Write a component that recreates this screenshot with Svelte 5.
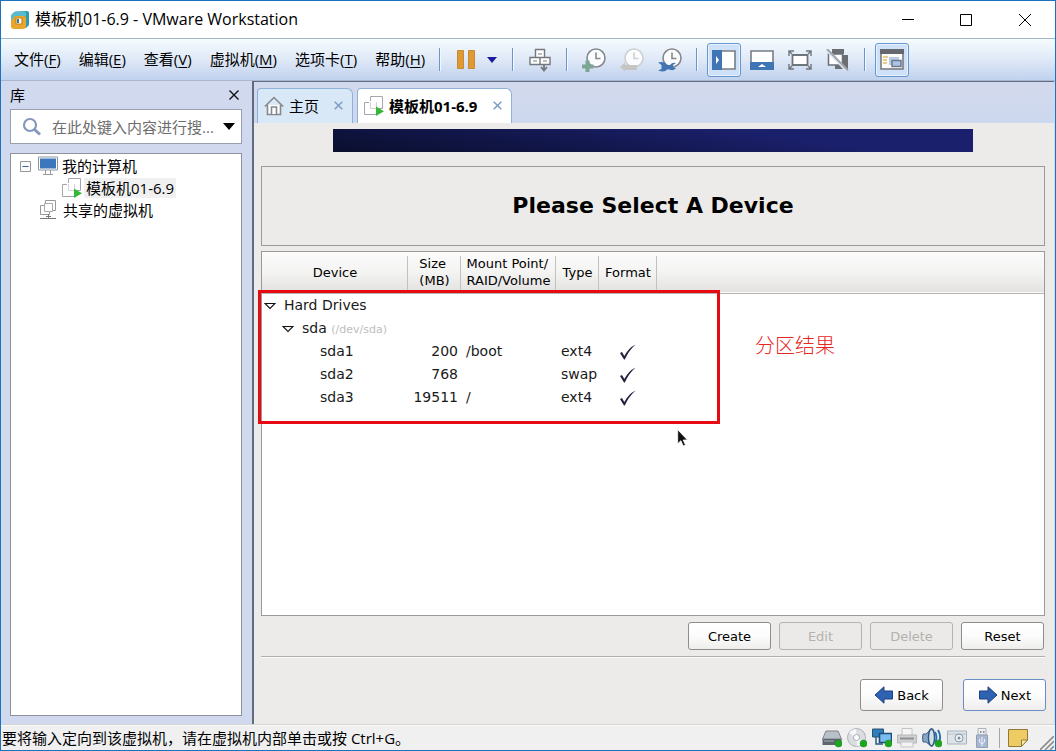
<script>
  const menus = [
    ['文件', 'F'],
    ['编辑', 'E'],
    ['查看', 'V'],
    ['虚拟机', 'M'],
    ['选项卡', 'T'],
    ['帮助', 'H']
  ];
  const partitions = [
    { name: 'sda1', size: 200, mount: '/boot', type: 'ext4' },
    { name: 'sda2', size: 768, mount: '', type: 'swap' },
    { name: 'sda3', size: 19511, mount: '/', type: 'ext4' }
  ];
  let query = $state('');
</script>

{#snippet clock(color)}
  <circle cx="14" cy="10" r="9" fill="#fbfcfe" stroke={color} stroke-width="1.6" />
  <path d="M14 4.500v6h4.500" fill="none" stroke={color} stroke-width="1.6" />
{/snippet}

{#snippet vmIcon()}
  <svg class="vm" width="20" height="20" viewBox="0 0 20 20" aria-hidden="true">
    <path d="M6.500.500h12v12h-12z" fill="#fff" stroke="#a9a3ae" />
    <path d="M.500 6.500h12v12H.500z" fill="#fff" stroke="#a9a3ae" />
    <path d="M5 5h9v9H5z" fill="#fff" />
    <path d="M6.500 6v6.500h6V6" fill="none" stroke="#d5d1d9" />
    <path d="M12 10.500v9.500l8-4.700z" fill="#35b835" />
  </svg>
{/snippet}

{#snippet expander()}
  <svg width="12" height="8" viewBox="0 0 12 8" aria-hidden="true">
    <path d="M1 1.500h10L6 6.500z" fill="#fff" stroke="#111" stroke-width="1.1" />
  </svg>
{/snippet}

{#snippet online()}
  <circle cx="16.500" cy="15.500" r="3.500" fill="#18a81c" stroke="#2c8c2c" stroke-width=".6" />
{/snippet}

<div class="window">
  <header class="titlebar">
    <svg width="20" height="20" viewBox="0 0 20 20" aria-hidden="true">
      <path d="M5 1.500 17 1q2 0 2 2v12l-3 3H5z" fill="#2f9bb3" />
      <path d="M1 5 4 2h12l-3 4v3H7v5l-3 3H2q-1 0-1-2z" fill="#5cbccb" />
      <path d="M1 14V7l4-1h9q2 0 2 2v9q-1 2-3 2H4q-3 0-3-3z" fill="#eaa62c" />
      <path d="M1 6 4 3h12v3H5L1 11z" fill="#5cbccb" />
      <path d="M6 8h6v6H6z" fill="#fff" stroke="#c9811b" stroke-width="1.200" />
      <path d="M7 9h2v4H7z" fill="#2c7da4" />
    </svg>
    <h1>模板机01-6.9 - VMware Workstation</h1>
    <div class="winctl">
      <button aria-label="最小化"><svg width="14" height="14" viewBox="0 0 14 14"><path d="M1 6.500h12" /></svg></button>
      <button aria-label="最大化"><svg width="14" height="14" viewBox="0 0 14 14"><path d="M1.500 1.500h11v11h-11z" /></svg></button>
      <button aria-label="关闭"><svg width="14" height="14" viewBox="0 0 14 14"><path d="m1 1 12 12M13 1 1 13" /></svg></button>
    </div>
  </header>

  <div class="toolbar">
    <nav>
      {#each menus as [label, key]}
        <button>{label}(<u>{key}</u>)</button>
      {/each}
    </nav>
    <div class="tools">
      <span class="sep"></span>
      <div class="power">
        <button aria-label="挂起"><svg width="18" height="20" viewBox="0 0 18 20"><path d="M.500.500h6v18h-6zM11.500.500h6v18h-6z" fill="#e09a34" stroke="#c98a35" /></svg></button>
        <button class="drop" aria-label="电源选项"><svg width="10" height="6" viewBox="0 0 10 6"><path d="M0 0h10L5 6z" fill="#1b1b9c" /></svg></button>
      </div>
      <span class="sep"></span>
      <button aria-label="发送 Ctrl+Alt+Del">
        <svg width="22" height="24" viewBox="0 0 22 24" fill="#fff" stroke="#74777c" stroke-width="1.400">
          <path d="M6.500 1.500h9v8h-9zM1 9.500h10v7H1zM11 9.500h10v7H11z" />
          <path d="M9 6h4M4 13h4M14 13h4" stroke="#a5a7ab" />
          <path d="M15 16v6m-3-3 3 3.500 3-3.500" fill="none" stroke-width="1.800" />
        </svg>
      </button>
      <span class="sep"></span>
      <button aria-label="拍摄快照"><svg width="24" height="24" viewBox="0 0 24 24">{@render clock('#85888c')}<path d="M3.500 12.500h4v4h4v4h-4v3.500h-4v-3.500H0v-4h3.500z" fill="#7da596" /></svg></button>
      <button aria-label="恢复快照" disabled><svg width="24" height="24" viewBox="0 0 24 24">{@render clock('#cdcfd2')}<path d="m0 19 5-4.500V17h12v5H5v1.500z" fill="#c6c5c4" /></svg></button>
      <button aria-label="管理快照"><svg width="24" height="24" viewBox="0 0 24 24">{@render clock('#85888c')}<path d="M0 14.500q7-1.500 9 2.500h3q2-3 6-2l-3 2v2l3 1q-3 3.500-6.500 1.500H9Q7 25 0 22.500l3.500-1.500v-4z" fill="#4476b4" /></svg></button>
      <span class="sep"></span>
      <button class="on" aria-label="显示库"><svg width="24" height="20" viewBox="0 0 24 20"><path d="M1 1h22v18H1z" fill="#fff" stroke="#777d87" stroke-width="1.600" /><path d="M0 0h10v20H0z" fill="#3f74b5" /><path d="m4 6 3 4-3 4z" fill="#fff" /></svg></button>
      <button aria-label="显示缩略图栏"><svg width="24" height="20" viewBox="0 0 24 20"><path d="M1 1h22v18H1z" fill="#fff" stroke="#777d87" stroke-width="1.600" /><path d="M0 12h24v8H0z" fill="#3f74b5" /><path d="m8 17 4-3 4 3z" fill="#fff" /></svg></button>
      <button aria-label="全屏"><svg width="24" height="20" viewBox="0 0 24 20" fill="none" stroke="#70757d" stroke-width="1.800"><path d="M4.500 5h15v10h-15z" fill="#fff" /><path d="M1 6V1h5M18 1h5v5M23 14v5h-5M6 19H1v-5M1 1l3 3M23 1l-3 3M23 19l-3-3M1 19l3-3" stroke-width="1.400" /></svg></button>
      <button aria-label="Unity"><svg width="24" height="22" viewBox="0 0 24 22"><path d="M6 0h12v5H6zM17 6h5v14H9v-4h8z" fill="#6b6f75" /><path d="M2.500 5h14v11h-14z" fill="#fff" stroke="#6b6f75" stroke-width="1.500" /><path d="m1 1 20 21" stroke="#dfe7f3" stroke-width="3" /><path d="m1 0 21 21.500" stroke="#a1a5ac" stroke-width="2" /></svg></button>
      <span class="sep"></span>
      <button class="on" aria-label="控制台视图"><svg width="24" height="21" viewBox="0 0 24 21"><path d="M1 1h22v19H1z" fill="#fbfbf8" stroke="#70757d" stroke-width="1.500" /><path d="M0 0h24v5H0z" fill="#65696f" /><path d="M3 8h5M3 11h4M3 14h4" stroke="#dfc067" stroke-width="1.500" /><path d="M9 8h10v8H9z" fill="#b8cbe8" /><path d="M12 11.500h9v6h-9z" fill="#a8c4e8" stroke="#6f7885" stroke-width="1.500" /></svg></button>
    </div>
  </div>

  <div class="body">
    <aside>
      <div class="libhead">
        <h2>库</h2>
        <button aria-label="关闭库"><svg width="10" height="10" viewBox="0 0 10 10"><path d="m.500.500 9 9M9.500.500l-9 9" stroke="#111" stroke-width="1.400" /></svg></button>
      </div>
      <label class="search">
        <svg width="20" height="20" viewBox="0 0 20 20" aria-hidden="true"><circle cx="8" cy="8" r="6" fill="none" stroke="#8299bd" stroke-width="2.200" /><path d="m12.500 12.500 5.500 5" stroke="#8299bd" stroke-width="3" /></svg>
        <input type="text" aria-label="搜索" placeholder="在此处键入内容进行搜..." bind:value={query} />
        <button aria-label="搜索选项"><svg width="12" height="7" viewBox="0 0 12 7"><path d="M0 0h12L6 7z" /></svg></button>
      </label>
      <ul class="tree">
        <li>
          <button class="fold" aria-label="折叠"><svg width="11" height="11" viewBox="0 0 11 11"><path d="M.500.500h10v10H.500z" fill="#fafafa" stroke="#979797" /><path d="M2.500 5.500h6" stroke="#3e5ea5" /></svg></button>
          <svg width="20" height="20" viewBox="0 0 20 20" aria-hidden="true"><path d="M.500 1h19v13H.500z" fill="#fff" stroke="#8f959d" /><path d="M2 2.500h16v10H2z" fill="#3a77bd" /><path d="M7.500 14v4M12.500 14v4M5 18.500h10" stroke="#9a9a9a" /></svg>
          <span>我的计算机</span>
        </li>
        <li class="child">{@render vmIcon()}<span class="current">模板机01-6.9</span></li>
        <li class="shared">
          <svg width="20" height="20" viewBox="0 0 20 20" aria-hidden="true"><path d="M6.500.500h10v10h-10zM1.500 5.500h9v9h-9z" fill="#fff" stroke="#999" /><path d="M5.500 3.500h8v8h-8z" fill="#fff" stroke="#aaa" /><path d="M9.500 14v5M1 18.500h16M7 16.500h5" stroke="#777" /></svg>
          <span>共享的虚拟机</span>
        </li>
      </ul>
    </aside>

    <main>
      <div class="tabs">
        <div class="tab">
          <svg width="20" height="20" viewBox="0 0 20 20" fill="#fff" stroke="#84878b" stroke-width="1.600" aria-hidden="true"><path d="M3.500 9v9.500h13V9" /><path d="M.800 10.500 10 1.500l9.200 9" fill="none" /><path d="M7.500 18v-7h5v7" /></svg>
          <a href="#home">主页</a>
          <button aria-label="关闭主页"><svg width="9" height="9" viewBox="0 0 9 9"><path d="m.700.700 7.600 7.600M8.300.700.700 8.300" /></svg></button>
        </div>
        <div class="tab active">
          {@render vmIcon()}
          <a href="#vm">模板机01-6.9</a>
          <button aria-label="关闭模板机01-6.9"><svg width="9" height="9" viewBox="0 0 9 9"><path d="m.700.700 7.600 7.600M8.300.700.700 8.300" /></svg></button>
        </div>
      </div>

      <div class="screen">
        <div class="banner"></div>
        <h2 class="prompt">Please Select A Device</h2>
        <div class="devices">
          <table>
            <colgroup><col class="c1" /><col class="c2" /><col class="c3" /><col class="c4" /><col class="c5" /><col /></colgroup>
            <thead>
              <tr>
                <th><span>Device</span></th>
                <th><span>Size<br />(MB)</span></th>
                <th><span>Mount Point/<br />RAID/Volume</span></th>
                <th><span>Type</span></th>
                <th><span>Format</span></th>
                <td></td>
              </tr>
            </thead>
            <tbody>
              <tr><td colspan="6"><div class="node">{@render expander()}<span>Hard Drives</span></div></td></tr>
              <tr><td colspan="6"><div class="node disk">{@render expander()}<span>sda <small>(/dev/sda)</small></span></div></td></tr>
              {#each partitions as p}
                <tr>
                  <td class="part">{p.name}</td>
                  <td class="num">{p.size}</td>
                  <td>{p.mount}</td>
                  <td>{p.type}</td>
                  <td class="tick"><svg width="18" height="16" viewBox="0 0 18 16" role="img" aria-label="Format"><path d="m1 9 2-1 2.300 4Q9.500 4 16.500.500 9.500 7 5.800 15.500H5z" fill="#23233f" /></svg></td>
                  <td></td>
                </tr>
              {/each}
            </tbody>
          </table>
          <div class="frame"></div>
          <p class="note">分区结果</p>
          <svg class="cursor" width="12" height="18" viewBox="0 0 12 18" aria-hidden="true"><path d="M.700.700v14l3.200-3 2.300 5.300 2.300-1-2.300-5h4.300z" fill="#111" stroke="#fff" stroke-width=".8" /></svg>
        </div>
        <div class="actions">
          <button>Create</button>
          <button disabled>Edit</button>
          <button disabled>Delete</button>
          <button>Reset</button>
        </div>
        <div class="steps">
          <button><svg width="20" height="18" viewBox="0 0 20 18" aria-hidden="true"><path d="M1 9 10 .800V5h8.500v8H10v4.200z" fill="#2f62b3" stroke="#1d3f7b" /></svg>Back</button>
          <button class="next"><svg width="20" height="18" viewBox="0 0 20 18" aria-hidden="true"><path d="M19 9 10 .800V5H1.500v8H10v4.200z" fill="#2f62b3" stroke="#1d3f7b" /></svg>Next</button>
        </div>
      </div>
    </main>
  </div>

  <footer>
    <p>要将输入定向到该虚拟机，请在虚拟机内部单击或按 Ctrl+G。</p>
    <div class="tray">
      <button aria-label="硬盘"><svg width="20" height="20" viewBox="0 0 20 20"><path d="M4 3h12l3.500 8H.500z" fill="#b9c0c8" stroke="#7e858d" /><path d="M.500 11h19v6H.500z" fill="#5d666f" /><path d="M2 13h10" stroke="#a6adb5" />{@render online()}</svg></button>
      <button aria-label="光驱"><svg width="20" height="20" viewBox="0 0 20 20"><circle cx="9.500" cy="9.500" r="9" fill="#dadde2" stroke="#adb1b8" /><path d="M9.500 9.500 2 5q3-4 7-4zM9.500 9.500 17 14q-3 4-7 4z" fill="#f5f6f8" /><circle cx="9.500" cy="9.500" r="3" fill="#fff" stroke="#a7abb1" />{@render online()}</svg></button>
      <button aria-label="网络适配器"><svg width="20" height="20" viewBox="0 0 20 20"><path d="M.500 1h11v8H.500z" fill="#2f7dbb" stroke="#265273" /><path d="M4 9v7h7" fill="none" stroke="#2a5a80" stroke-width="1.500" /><path d="M7.500 5.500h12v9h-12z" fill="#79bdf0" stroke="#1d4e79" stroke-width="1.600" />{@render online()}</svg></button>
      <button aria-label="打印机"><svg width="20" height="20" viewBox="0 0 20 20"><path d="M5 .500h10V8H5z" fill="#f5f5f5" stroke="#c4c4c4" /><path d="M.500 7h19v8H.500z" fill="#cfd1d3" stroke="#b4b6b8" /><path d="M3 10.500h14" stroke="#8f9295" stroke-width="2" /><path d="M4 14h12v5H4z" fill="#f3f3f3" stroke="#c4c4c4" /></svg></button>
      <button aria-label="声卡"><svg width="20" height="20" viewBox="0 0 20 20"><path d="M1 6h3l6-5.500v18L4 14H1q-1-4 0-8z" fill="#88a5c2" stroke="#3c668f" /><ellipse cx="9.500" cy="9.500" rx="3" ry="8.500" fill="#d3dfeb" stroke="#31597f" stroke-width="1.400" /><path d="M13 4q3 5.500 0 11M16 2q4 7 .500 13" fill="none" stroke="#2970b1" stroke-width="2" />{@render online()}</svg></button>
      <button aria-label="摄像头"><svg width="20" height="20" viewBox="0 0 20 20"><path d="M.500 3h19v13H.500z" fill="#dce4e9" stroke="#a8b4bc" /><path d="M1 6h18" stroke="#b8c4cc" /><circle cx="12" cy="10" r="4" fill="#eef2f5" stroke="#8798a6" /><circle cx="12" cy="10" r="1.500" fill="#7e91a3" /></svg></button>
      <button aria-label="USB"><svg width="20" height="20" viewBox="0 0 20 20"><path d="M6 .500h8V7H6z" fill="#eee" stroke="#b0b4ba" /><path d="M8 3h1.500v2H8zM11 3h1.500v2H11z" fill="#8b9199" /><path d="M4.500 7h11v12.500h-11z" fill="#aab8cf" stroke="#8f9fba" /><path d="M10 9v9M7.500 11v3l2.500 2M12.500 11v3L10 16" fill="none" stroke="#edf2fa" /></svg></button>
      <span class="bar"></span>
      <button aria-label="消息"><svg width="20" height="20" viewBox="0 0 20 20"><path d="M.500 1.500h19V12l-6 6.500H.500z" fill="#efcb63" stroke="#8f7a3c" /><path d="M19.500 12h-6v6.500z" fill="#fae9a8" stroke="#8f7a3c" /></svg></button>
      <svg class="grip" width="14" height="14" viewBox="0 0 14 14" aria-hidden="true"><path d="M0 14 14 0M5 14l9-9M10 14l4-4" stroke="#8d8d8d" stroke-width="1.600" /></svg>
    </div>
  </footer>
</div>

<style>
  :global(body) { margin: 0; }
  .window, .window * { box-sizing: border-box; }
  .window {
    min-height: 100vh;
    display: flex;
    flex-direction: column;
    border: 1px solid #1b72bd;
    background: #f0f0f0;
    color: #000;
    font: 15px/20px "Open Sans", "Noto Sans CJK SC", sans-serif;
  }
  button {
    display: inline-flex;
    align-items: center;
    justify-content: center;
    padding: 0;
    border: 0;
    background: none;
    color: inherit;
    font: inherit;
    white-space: nowrap;
  }
  svg { display: block; flex: none; }
  h1, h2, p, ul { margin: 0; padding: 0; font-size: inherit; font-weight: 400; }
  a { color: inherit; text-decoration: none; }

  .titlebar {
    display: flex;
    align-items: center;
    gap: 5px;
    height: 38px;
    padding-left: 9px;
    border-bottom: 1px solid #a3b5c9;
    background: #fff;
  }
  .titlebar h1 { font-size: 16px; padding-bottom: 2px; }
  .winctl { display: flex; margin-left: auto; }
  .winctl button { width: 58px; height: 36px; }
  .winctl button:last-child { width: 60px; }
  .winctl path { fill: none; stroke: #000; }

  .toolbar {
    display: flex;
    align-items: center;
    height: 42px;
    background: linear-gradient(#f5fbfe, #dfe9f7 50%, #c0d2ee);
    border-bottom: 1px solid #a9b6cd;
  }
  nav { display: flex; gap: 18px; flex: 0 0 438px; padding: 0 0 2px 13px; }
  nav u { text-underline-offset: 2px; }
  .tools { display: flex; align-items: center; gap: 4px; }
  .tools button { width: 34px; height: 34px; }
  .tools .on { border: 1px solid #6897cf; border-radius: 3px; background: #cfe1f8; box-shadow: inset 0 0 0 1px #e8f2fd; }
  .sep { width: 2px; height: 23px; margin: 0 5px; background: #f4f8fd; border-left: 1px solid #6b95cc; }
  .tools .sep:first-child { margin-left: 0; }
  .power { display: flex; }
  .tools .power button { width: 31px; }
  .tools .power .drop { width: 22px; }

  .body { flex: 1; display: flex; background: #d1d9ee; }
  aside { width: 251px; flex: none; display: flex; flex-direction: column; padding: 0 10px 8px 9px; }
  .libhead { display: flex; align-items: center; justify-content: space-between; height: 28px; padding-right: 2px; }
  .libhead button { width: 12px; height: 20px; }
  .search { display: flex; align-items: center; height: 35px; margin-bottom: 9px; padding: 0 6px 0 11px; border: 1px solid #9a9fad; background: #fff; }
  .search input { flex: 1; min-width: 0; margin-left: 10px; padding: 0; border: 0; outline: 0; background: none; font: inherit; }
  .search input::placeholder { color: #6d6d6d; opacity: 1; }
  .tree { flex: 1; padding: 1px 8px; border: 1px solid #8e929c; background: #fff; list-style: none; }
  .tree li { display: flex; align-items: center; height: 22px; gap: 4px; }
  .fold { width: 13px; margin-right: 2px; }
  .tree .child { padding-left: 43px; gap: 2px; }
  .tree .shared { padding-left: 20px; }
  .current { padding: 0 2px; background: #f0f0f0; }

  main { flex: 1; min-width: 0; display: flex; flex-direction: column; border: solid #606b82; border-width: 1px 0 0 2px; margin-right: 1px; }
  .tabs { display: flex; align-items: flex-end; gap: 4px; height: 41px; padding-left: 3px; background: linear-gradient(#d3d9ec, #ccd8ee); }
  .tab { display: flex; align-items: center; width: 96px; height: 35px; padding: 0 9px 1px 6px; border: 1px solid #8eb1d9; border-bottom: 0; border-radius: 4px 6px 0 0; background: #d9e8f7; }
  .tab a { margin: 0 auto 0 5px; white-space: nowrap; }
  .tab button path { fill: none; stroke: #7f9fc6; stroke-width: 1.6; }
  .active { width: 155px; background: #fff; font-weight: 700; }

  .screen { flex: 1; display: flex; flex-direction: column; padding: 6px 9px 13px 7px; background: #edebe9; font: 14px/17px "DejaVu Sans", sans-serif; }
  .banner { width: 82%; max-width: 640px; height: 23px; margin: 0 auto 14px; background: linear-gradient(8deg, #0a0f2e, #101546 30%, #1b206c 70%, #1b206e); }
  .prompt { display: grid; place-items: center; height: 80px; margin-bottom: 5px; border: 1px solid #9b9a98; font-size: 22px; font-weight: 700; line-height: 24px; }
  .devices { position: relative; flex: 1; border: 1px solid #9b9a98; background: #fff; }
  table { width: 100%; border-collapse: collapse; table-layout: fixed; }
  .c1 { width: 146px; }
  .c2 { width: 53px; }
  .c3 { width: 95px; }
  .c4 { width: 43px; }
  .c5 { width: 58px; }
  thead tr { height: 41px; background: linear-gradient(#fbfbfb, #f4f4f3 50%, #e3e2e1); border-bottom: 1px solid #b5b3b0; }
  th { padding: 0; font-size: 13px; font-weight: 400; background: linear-gradient(#c3c1bf, #c3c1bf) right 100% / 1px 37px no-repeat; }
  th span { display: inline-block; text-align: left; white-space: nowrap; }
  tbody td { height: 23px; padding: 2px 5px 0; color: #1a1a1a; }
  .node { display: flex; align-items: center; gap: 8px; margin-left: -3px; }
  .disk { margin-left: 15px; }
  small { color: #bdbdbd; font-size: 11px; }
  tbody .part { padding-left: 58px; }
  tbody .num { padding-left: 0; padding-right: 3px; text-align: right; }
  .tick svg { margin: 0 auto; }

  .frame { position: absolute; left: -4px; top: 38px; width: 462px; height: 134px; border: 3px solid #e60b12; }
  .note { position: absolute; left: 493px; top: 80px; color: #e8271f; font: 300 20px/26px "Noto Sans CJK SC", sans-serif; }
  .cursor { position: absolute; left: 415px; top: 177px; }

  .actions { display: flex; justify-content: flex-end; gap: 8px; padding: 6px 1px 6px 0; border-bottom: 1px solid #b2b0ad; box-shadow: 0 1px #fafafa; }
  .screen button { width: 83px; height: 28px; border: 1px solid #8f8d8a; border-radius: 3px; background: linear-gradient(#fff, #fcfcfc 50%, #efeeed); font-size: 13px; }
  .screen button:disabled { border-color: #b5b3b0; background: #eceae8; color: #b3b1ae; }
  .steps { display: flex; justify-content: flex-end; gap: 20px; margin: 22px -1px 0 0; }
  .steps button { height: 32px; gap: 3px; }
  .steps .next { border-color: #6a8dc6; }

  footer { display: flex; align-items: center; justify-content: space-between; height: 26px; padding-left: 1px; border-top: 1px solid #d5d5d5; background: #f0f0f0; box-shadow: inset 0 1px #fafafa; }
  .tray { display: flex; align-items: center; align-self: stretch; gap: 5px; }
  .bar { width: 1px; height: 20px; margin: 0 3px 0 2px; background: #a5a5a5; }
  .grip { align-self: flex-end; margin: 0 1px 0 7px; }
</style>
